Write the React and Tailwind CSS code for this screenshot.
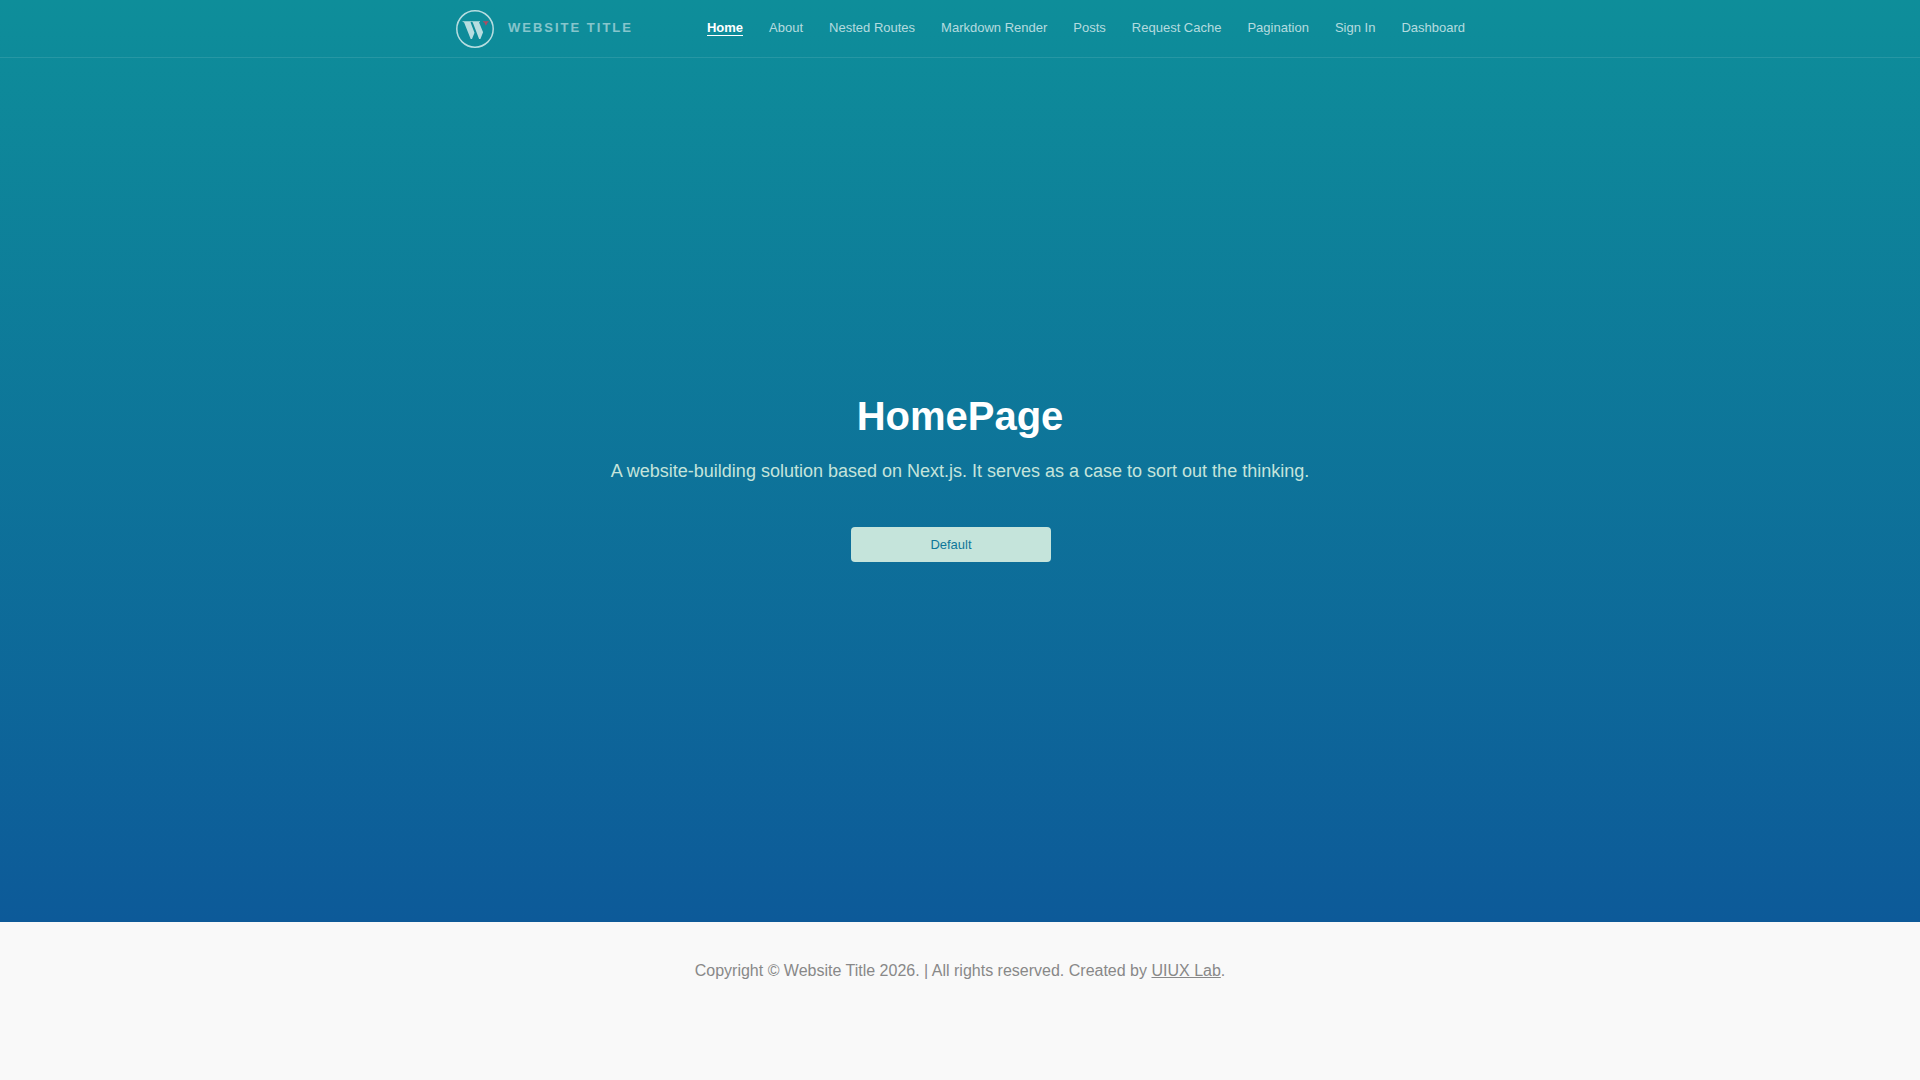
const links = [
  'Home',
  'About',
  'Nested Routes',
  'Markdown Render',
  'Posts',
  'Request Cache',
  'Pagination',
  'Sign In',
  'Dashboard',
];

const Logo = () => (
  <svg width="38" height="38" viewBox="0 0 38 38" fill="none" aria-hidden="true">
    <circle cx="19" cy="19" r="18.2" stroke="#b7dde0" strokeWidth="1.5" />
    <path
      d="M6.6 11.2h8.8v.7l-.9.4 4 10.4-2.5 6.2h-1.3L8 12.3l-1.4-.4z"
      fill="#b7dde0"
    />
    <path
      d="M15.4 11.2H24v.7l-1 .4 4.1 9.9-2.7 6.7h-1.3l-6.4-16.6-1.3-.4z"
      fill="#b7dde0"
    />
    <path d="M27 11.2h5.6v.8l-1 .4-1.7 3.3-1.6-3.3-1.3-.4z" fill="#b04a62" />
  </svg>
);

const Header = () => (
  <header className="w-full border-b border-white/10">
    <div className="max-w-[1140px] mx-auto h-[57px] pl-[66px] pr-[65px] flex items-center justify-between">
      <a href="#" className="flex items-center gap-[14px]">
        <Logo />
        <span className="text-[13px] leading-4 pb-px font-bold uppercase tracking-[2px] text-white/50">
          Website Title
        </span>
      </a>
      <nav className="pb-0.5">
        <ul className="flex items-center gap-[26px]">
          {links.map((name) => (
            <li key={name} className="flex">
              <a
                href="#"
                className={
                  name === 'Home'
                    ? 'text-[13px] leading-[15px] font-bold text-white border-b border-white'
                    : 'text-[13px] leading-[15px] text-white/70 border-b border-transparent'
                }
              >
                {name}
              </a>
            </li>
          ))}
        </ul>
      </nav>
    </div>
  </header>
);

const App = () => {
  return (
    <div className="min-h-screen bg-[#f9f9f9] font-['Liberation_Sans',Arial,sans-serif]">
      <div className="bg-linear-to-b/srgb from-[#0e8e9a] to-[#0d5a99]">
        <Header />
        <main className="flex flex-col items-center text-center pt-[334px] pb-[360px]">
          <h1 className="text-[40px] leading-[48px] font-bold text-white">HomePage</h1>
          <p className="mt-[18px] text-lg leading-[26px] text-[#c5e4db]">
            A website-building solution based on Next.js. It serves as a case to sort out the thinking.
          </p>
          <button
            type="button"
            className="mt-[43px] mr-[18px] w-[200px] h-[35px] rounded bg-[#c5e4db] text-[13px] text-[#0e7799]"
          >
            Default
          </button>
        </main>
      </div>
      <footer className="py-[37px] text-center text-base text-[#888888]">
        Copyright © Website Title 2026. | All rights reserved. Created by{' '}
        <a href="#" className="underline">UIUX Lab</a>.
      </footer>
    </div>
  );
};

export default App;
